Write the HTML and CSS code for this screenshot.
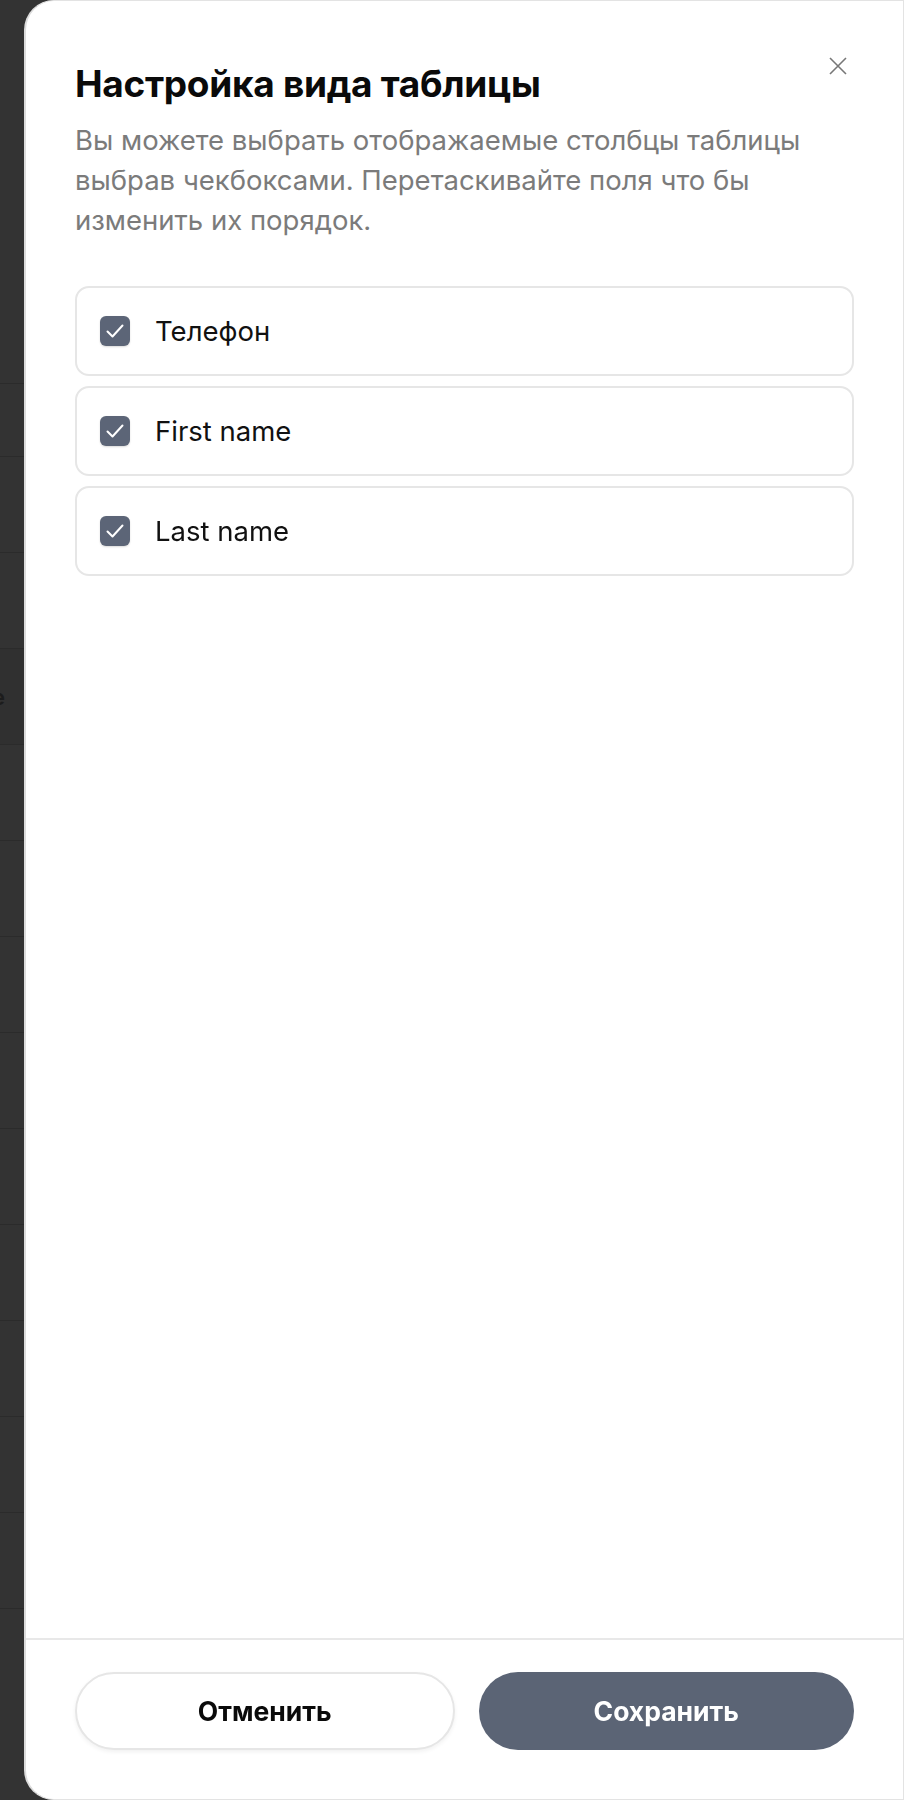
FILE: index.html
```html
<!DOCTYPE html>
<html lang="ru">
<head>
<meta charset="utf-8">
<title>Настройка вида таблицы</title>
<link rel="stylesheet" href="styles.css">
</head>
<body>
<div class="backdrop">
  <div class="bg-row bg-head"></div>
  <div class="bg-row bg-short"></div>
  <div class="bg-row"></div>
  <div class="bg-row bg-dark"><div class="bg-cell">Name</div></div>
  <div class="bg-row"></div>
  <div class="bg-row"></div>
  <div class="bg-row"></div>
  <div class="bg-row"></div>
  <div class="bg-row"></div>
  <div class="bg-row"></div>
  <div class="bg-row"></div>
  <div class="bg-row"></div>
  <div class="bg-row"></div>
  <div class="bg-row"></div>
</div>

<aside class="drawer">
  <button class="close" aria-label="Закрыть">
    <svg width="18" height="18" viewBox="0 0 18 18"><path d="M1 1 L17 17 M17 1 L1 17" stroke="#777" stroke-width="1.6" fill="none"/></svg>
  </button>
  <div class="drawer-body">
    <h1 class="title">Настройка вида таблицы</h1>
    <p class="desc">Вы можете выбрать отображаемые столбцы таблицы выбрав чекбоксами. Перетаскивайте поля что бы изменить их порядок.</p>
    <ul class="fields">
      <li class="field">
        <span class="check"><svg width="30" height="30" viewBox="0 0 30 30"><path d="M7.5 15.5 L12.5 20.5 L22.5 9.5" stroke="#fff" stroke-width="2" fill="none" stroke-linecap="round" stroke-linejoin="round"/></svg></span>
        <span class="label">Телефон</span>
      </li>
      <li class="field">
        <span class="check"><svg width="30" height="30" viewBox="0 0 30 30"><path d="M7.5 15.5 L12.5 20.5 L22.5 9.5" stroke="#fff" stroke-width="2" fill="none" stroke-linecap="round" stroke-linejoin="round"/></svg></span>
        <span class="label">First name</span>
      </li>
      <li class="field">
        <span class="check"><svg width="30" height="30" viewBox="0 0 30 30"><path d="M7.5 15.5 L12.5 20.5 L22.5 9.5" stroke="#fff" stroke-width="2" fill="none" stroke-linecap="round" stroke-linejoin="round"/></svg></span>
        <span class="label">Last name</span>
      </li>
    </ul>
  </div>
  <div class="drawer-footer">
    <button class="btn btn-cancel">Отменить</button>
    <button class="btn btn-save">Сохранить</button>
  </div>
</aside>
</body>
</html>
```

FILE: styles.css
```css
* { box-sizing: border-box; }
html, body { margin: 0; padding: 0; }
body {
  background: #333333;
  font-family: Inter, "Noto Sans", sans-serif;
  height: 1800px;
  overflow: hidden;
}

.backdrop {
  display: flex;
  flex-direction: column;
  padding-top: 383px;
}
.bg-row {
  height: 96px;
  border-top: 1px solid #2b2b2b;
  display: flex;
  align-items: center;
}
.bg-head { height: 73px; }
.bg-dark { background: #303030; }
.bg-cell {
  width: 5px;
  display: flex;
  justify-content: flex-end;
  white-space: nowrap;
  color: #1c1c1c;
  font-size: 22px;
  font-weight: 600;
}

.drawer {
  position: fixed;
  top: 0;
  left: 24px;
  width: 880px;
  height: 1800px;
  background: #ffffff;
  border: 1px solid #e3e3e3;
  border-left: 2px solid #dcdcdc;
  border-radius: 30px 0 0 30px;
  display: flex;
  flex-direction: column;
}

.close {
  position: absolute;
  top: 56px;
  right: 56px;
  width: 18px;
  height: 18px;
  padding: 0;
  border: 0;
  background: none;
  display: flex;
}

.drawer-body {
  flex: 1;
  padding: 61px 49px 0 49px;
}

.title {
  margin: 0;
  font-size: 37px;
  line-height: 44px;
  font-weight: 700;
  color: #0a0a0a;
  letter-spacing: -0.3px;
}

.desc {
  margin: 14px 0 0 0;
  font-size: 27.5px;
  line-height: 40px;
  color: #7b7b7b;
}

.fields {
  list-style: none;
  margin: 46px 0 0 0;
  padding: 0;
  display: flex;
  flex-direction: column;
  gap: 10px;
}

.field {
  height: 90px;
  border: 2px solid #e6e6e6;
  border-radius: 14px;
  display: flex;
  align-items: center;
  padding-left: 23px;
  gap: 25px;
}

.check {
  width: 30px;
  height: 30px;
  border-radius: 6px;
  background: #5c6577;
  box-shadow: 0 1px 2px rgba(0,0,0,0.15);
  display: flex;
}

.label {
  font-size: 27.5px;
  color: #111;
}

.drawer-footer {
  border-top: 2px solid #e8e8e8;
  padding: 32px 49px 49px 49px;
  display: flex;
  gap: 24px;
}

.btn {
  flex: 1;
  height: 78px;
  border-radius: 39px;
  font-family: Inter, "Noto Sans", sans-serif;
  font-size: 26.5px;
  font-weight: 700;
}
.btn-cancel {
  background: #fff;
  color: #0a0a0a;
  border: 2px solid #e6e6e6;
  box-shadow: 0 2px 4px rgba(0,0,0,0.06);
}
.btn-save {
  background: #5b6475;
  color: #fff;
  border: 0;
}
```
